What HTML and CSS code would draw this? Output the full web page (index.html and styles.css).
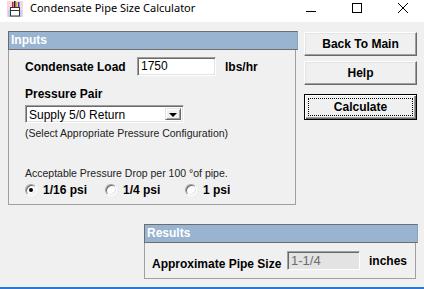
FILE: index.html
```html
<!DOCTYPE html>
<html>
<head>
<meta charset="utf-8">
<link rel="stylesheet" href="styles.css">
</head>
<body>
<div class="window">
  <div class="titlebar">
    <svg class="app-icon" width="16" height="16" viewBox="0 0 16 16">
      <rect x="0" y="0" width="16" height="16" fill="#f6d6e2"/>
      <rect x="1" y="9" width="14" height="7" fill="#c9cdf3"/>
      <rect x="5" y="1" width="1.5" height="5" fill="#d02020"/>
      <rect x="7" y="0" width="1.5" height="6" fill="#222"/>
      <rect x="9" y="1" width="1.5" height="5" fill="#e8b020"/>
      <rect x="11" y="1" width="1.5" height="5" fill="#3050c0"/>
      <rect x="3.5" y="6.5" width="9" height="8.5" fill="#fff" stroke="#333" stroke-width="1"/>
      <line x1="3.5" y1="9.5" x2="12.5" y2="9.5" stroke="#333" stroke-width="1"/>
    </svg>
    <span class="title">Condensate Pipe Size Calculator</span>
    <div class="controls">
      <svg class="ctl" width="46" height="22" viewBox="0 0 46 22"><line x1="18" y1="11.5" x2="28" y2="11.5" stroke="#000" stroke-width="1"/></svg>
      <svg class="ctl" width="46" height="22" viewBox="0 0 46 22"><rect x="18.5" y="3.5" width="9" height="9" fill="none" stroke="#000" stroke-width="1"/></svg>
      <svg class="ctl" width="46" height="22" viewBox="0 0 46 22"><path d="M18 3 L28 13 M28 3 L18 13" stroke="#000" stroke-width="1" fill="none"/></svg>
    </div>
  </div>
  <div class="client">
    <div class="top-row">
      <section class="group inputs">
        <div class="group-head">Inputs</div>
        <div class="group-body inputs-body">
          <div class="row load-row">
            <span class="lbl load-lbl">Condensate Load</span>
            <div class="field load-field">1750</div>
            <span class="lbl unit">lbs/hr</span>
          </div>
          <div class="lbl pp-lbl">Pressure Pair</div>
          <div class="combo">
            <span class="combo-text">Supply 5/0 Return</span>
            <span class="combo-btn"><span class="tri"></span></span>
          </div>
          <div class="note">(Select Appropriate Pressure Configuration)</div>
          <div class="note drop-note">Acceptable Pressure Drop per 100 °of pipe.</div>
          <div class="radios">
            <div class="opt"><span class="radio checked"></span><span class="lbl">1/16 psi</span></div>
            <div class="opt"><span class="radio"></span><span class="lbl">1/4 psi</span></div>
            <div class="opt"><span class="radio"></span><span class="lbl">1 psi</span></div>
          </div>
        </div>
      </section>
      <div class="buttons">
        <div class="btn">Back To Main</div>
        <div class="btn help">Help</div>
        <div class="btn default"><span class="focus">Calculate</span></div>
      </div>
    </div>
    <section class="group results">
      <div class="group-head">Results</div>
      <div class="group-body results-body">
        <span class="lbl res-lbl">Approximate Pipe Size</span>
        <div class="field res-field">1-1/4</div>
        <span class="lbl unit">inches</span>
      </div>
    </section>
  </div>
  <div class="bottom-edge"></div>
</div>
</body>
</html>
```

FILE: styles.css
```css
* { box-sizing: border-box; }
html, body { margin: 0; padding: 0; }
body {
  background: #f0f0f0;
  font-family: "Liberation Sans", Arial, sans-serif;
  color: #000;
  overflow: hidden;
}
.window {
  width: 424px;
  height: 289px;
  display: flex;
  flex-direction: column;
  background: #f0f0f0;
}
.titlebar {
  height: 22px;
  background: #fff;
  display: flex;
  align-items: flex-start;
  flex: none;
}
.app-icon {
  margin: 1px 0 0 7px;
  flex: none;
}
.title {
  font-family: "Noto Sans", "Open Sans", sans-serif;
  font-size: 11px;
  line-height: 16px;
  margin: 0 0 0 7px;
  color: #000;
}
.controls {
  margin-left: auto;
  display: flex;
  margin-right: -2px;
}
.ctl { display: block; }
.client {
  flex: 1;
  padding: 9px 0 0 8px;
}
.top-row {
  display: flex;
  align-items: flex-start;
}
.group-head {
  background: #99b4d1;
  color: #fff;
  font-weight: bold;
  font-size: 12px;
  line-height: 17px;
  height: 19px;
  padding-left: 2px;
  border: 1px solid #6d6d6d;
  border-right-color: #8aa3bd;
}
.group-body {
  border: 1px solid #a0a0a0;
  border-top: none;
}
.inputs { width: 290px; flex: none; }
.inputs .group-body { width: 288px; height: 155px; padding: 7px 0 0 16px; }
.lbl {
  font-weight: bold;
  font-size: 12px;
  line-height: 14px;
}
.row { display: flex; align-items: center; }
.load-row { height: 19px; }
.load-lbl { width: 112px; flex: none; }
.field {
  background: #fff;
  border: 1px solid;
  border-color: #a0a0a0 #fff #fff #a0a0a0;
  box-shadow: inset 1px 1px #696969, inset -1px -1px #e3e3e3;
  font-size: 12px;
  line-height: 15px;
  padding: 1px 0 0 3px;
}
.load-field { width: 79px; height: 19px; }
.unit { margin-left: 9px; }
.pp-lbl { margin-top: 11px; }
.combo {
  margin-top: 4px;
  width: 159px;
  height: 18px;
  background: #fff;
  border: 1px solid;
  border-color: #a0a0a0 #fff #fff #a0a0a0;
  box-shadow: inset 1px 1px #696969, inset -1px -1px #e3e3e3;
  display: flex;
  align-items: stretch;
  padding: 2px;
}
.combo-text {
  flex: 1;
  font-size: 12px;
  line-height: 14px;
  padding-left: 1px;
}
.combo-btn {
  width: 16px;
  background: #f0f0f0;
  border: 1px solid;
  border-color: #e3e3e3 #696969 #696969 #e3e3e3;
  box-shadow: inset 1px 1px #fff, inset -1px -1px #a0a0a0;
  display: flex;
  align-items: center;
  justify-content: center;
}
.tri {
  width: 0; height: 0;
  border-left: 4px solid transparent;
  border-right: 4px solid transparent;
  border-top: 4px solid #000;
  margin-top: 1px;
}
.note {
  font-size: 10.5px;
  line-height: 14px;
  color: #222;
  margin-top: 3px;
}
.drop-note { margin-top: 26px; }
.radios {
  display: flex;
  margin-top: 3px;
  height: 14px;
  align-items: center;
}
.opt {
  width: 80px;
  flex: none;
  display: flex;
  align-items: center;
}
.radio {
  width: 12px;
  height: 12px;
  border-radius: 50%;
  background: #fff;
  border: 1px solid;
  border-color: #a0a0a0 #fff #fff #a0a0a0;
  box-shadow: inset 1px 1px #696969, inset -1px -1px #e3e3e3;
  margin-right: 6px;
  position: relative;
  flex: none;
}
.radio.checked::after {
  content: "";
  position: absolute;
  left: 3px; top: 3px;
  width: 4px; height: 4px;
  border-radius: 50%;
  background: #000;
}
.buttons {
  margin-left: 6px;
  padding-top: 1px;
  display: flex;
  flex-direction: column;
  width: 113px;
}
.btn {
  height: 24px;
  background: #f0f0f0;
  border: 1px solid;
  border-color: #fff #696969 #696969 #fff;
  box-shadow: inset -1px -1px #a0a0a0, inset 1px 1px #e3e3e3;
  font-weight: bold;
  font-size: 12px;
  display: flex;
  align-items: center;
  justify-content: center;
}
.help { margin-top: 5px; }
.default {
  margin-top: 9px;
  height: 26px;
  border: 1px solid #000;
  box-shadow: inset 1px 1px #fff, inset -1px -1px #696969, inset -2px -2px #a0a0a0;
  padding: 3px;
}
.focus {
  flex: 1;
  align-self: stretch;
  border: 1px dotted #000;
  display: flex;
  align-items: center;
  justify-content: center;
}
.results {
  margin: 19px 0 0 136px;
  width: 274px;
}
.results-body {
  width: 272px;
  height: 36px;
  display: flex;
  align-items: center;
  padding-left: 7px;
}
.res-lbl { width: 135px; flex: none; margin-top: 6px; }
.res-field {
  width: 73px;
  height: 19px;
  background: #e3e3e3;
  color: #6d6d6d;
  font-size: 13px;
  border-color: #a0a0a0 #fff #fff #a0a0a0;
}
.bottom-edge {
  height: 2px;
  background: #2a7ad5;
  flex: none;
}
```
